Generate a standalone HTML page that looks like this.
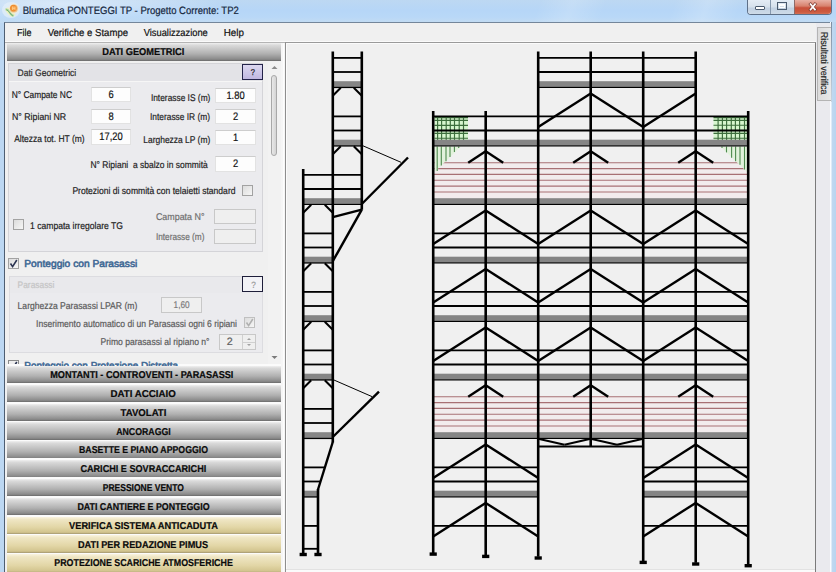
<!DOCTYPE html>
<html><head><meta charset="utf-8"><style>
html,body{margin:0;padding:0}
body{width:836px;height:572px;overflow:hidden;position:relative;background:#bcd7f2;font-family:"Liberation Sans",sans-serif}
.t{position:absolute;white-space:nowrap;line-height:0;height:0;transform-origin:0 0;-webkit-text-stroke:0.2px currentColor;text-rendering:geometricPrecision}
</style></head><body>
<div style="position:absolute;left:0;top:0;width:836px;height:23px;background:linear-gradient(180deg,#bdd8f2 0%,#b6d6f7 45%,#b9d8f7 75%,#c4dcf2 100%)"></div>
<div style="position:absolute;left:0;top:0;width:836px;height:22px;background:linear-gradient(110deg,rgba(255,255,255,0) 0%,rgba(255,255,255,0) 64%,rgba(255,255,255,0.16) 68%,rgba(255,255,255,0) 72%,rgba(255,255,255,0) 80%,rgba(255,255,255,0.18) 84%,rgba(255,255,255,0) 88%)"></div>
<div style="position:absolute;left:0;top:0;width:300px;height:22px;background:radial-gradient(ellipse 160px 18px at 60px 4px,rgba(255,255,255,0.45),rgba(255,255,255,0))"></div>
<svg style="position:absolute;left:0;top:0" width="24" height="22" viewBox="0 0 24 22">
<defs><radialGradient id="halo"><stop offset="0" stop-color="#fff6d8"/><stop offset="0.6" stop-color="#fbe9c8" stop-opacity="0.8"/><stop offset="1" stop-color="#fbe9c8" stop-opacity="0"/></radialGradient>
<radialGradient id="orb" cx="0.45" cy="0.45"><stop offset="0" stop-color="#ffb060"/><stop offset="0.7" stop-color="#ee8a2c"/><stop offset="1" stop-color="#e9a050" stop-opacity="0.6"/></radialGradient></defs>
<ellipse cx="11" cy="10" rx="9" ry="8" fill="#e6f0f8" opacity="0.7"/>
<path d="M4.8 9.5 Q7 6.5 9 8 Q11 11.5 15.5 14.5 Q14 17.5 10.5 16.5 Q7 13.5 4.8 9.5 Z" fill="#eef2c0"/>
<path d="M5.6 9.6 Q8 9 9.6 12 Q11 14.8 13.6 16" stroke="#9fd09a" stroke-width="2.2" fill="none" opacity="0.9"/>
<path d="M6.4 9.8 Q8.6 10.5 10 13 Q11.2 15 12.8 15.8" stroke="#5f9a60" stroke-width="0.9" fill="none" opacity="0.8"/>
<circle cx="13.8" cy="8.6" r="6" fill="url(#halo)"/>
<circle cx="13.8" cy="8.5" r="4" fill="url(#orb)"/>
<path d="M12.6 6.5 V10 M15 6.5 V10 M12.6 8.3 H15" stroke="#ffd08a" stroke-width="0.8"/>
</svg>

<div style="position:absolute;left:747px;top:0;width:85px;height:15px;border:1px solid #5e7088;border-top:none;border-radius:0 0 4px 4px;box-sizing:border-box;overflow:hidden;background:#fff">
<div style="position:absolute;left:0;top:0;width:22px;height:15px;background:linear-gradient(180deg,#e4ecf5,#d6e1ec 45%,#c2d1e2 55%,#d0dde9)"></div>
<div style="position:absolute;left:22px;top:0;width:1px;height:15px;background:#8799ae"></div>
<div style="position:absolute;left:23px;top:0;width:23px;height:15px;background:linear-gradient(180deg,#e4ecf5,#d6e1ec 45%,#c2d1e2 55%,#d0dde9)"></div>
<div style="position:absolute;left:46px;top:0;width:1px;height:15px;background:#8d6a68"></div>
<div style="position:absolute;left:47px;top:0;width:38px;height:15px;background:linear-gradient(180deg,#e8b0a4,#d8826e 40%,#c8503a 52%,#cc5a40 80%,#d87a60)"></div>
</div>
<div style="position:absolute;left:755px;top:6px;width:10px;height:4px;background:#fff;border:1px solid #4a5a6e;box-sizing:border-box;border-radius:1px"></div>
<div style="position:absolute;left:777px;top:2px;width:10px;height:8px;border:1px solid #4a5a6e;box-sizing:border-box;background:transparent"><div style="position:absolute;left:1px;top:1px;right:1px;bottom:1px;border:1px solid #fff;border-top-width:2px"></div></div>
<svg style="position:absolute;left:806px;top:1px" width="13" height="11" viewBox="0 0 13 11">
<path d="M4.6 3.2 L9 8.6 M9 3.2 L4.6 8.6" stroke="#7a3a30" stroke-width="3.2" stroke-linecap="square" opacity="0.85"/>
<path d="M4.6 3.2 L9 8.6 M9 3.2 L4.6 8.6" stroke="#fff" stroke-width="1.7" stroke-linecap="square"/></svg>
<div style="position:absolute;left:4px;top:22px;width:828px;height:550px;background:#f0f0f0;border-left:1px solid #4e5e72;border-top:1px solid #74869a;box-sizing:border-box"></div>
<div style="position:absolute;left:830px;top:22px;width:6px;height:550px;background:linear-gradient(90deg,#fafcff 0%,#fafcff 15%,#c0d8f0 35%,#b8d4f0)"></div>
<div style="position:absolute;left:831px;top:22px;width:1px;height:80px;background:linear-gradient(180deg,#7d8ea2,#c8d4e0)"></div>
<div style="position:absolute;left:5px;top:23px;width:826px;height:18px;background:#f0f0f0"></div>
<div style="position:absolute;left:5px;top:41px;width:826px;height:1px;background:#fafafa"></div>
<div style="position:absolute;left:5px;top:42px;width:811px;height:1px;background:#b4b4b4"></div>




<div style="position:absolute;left:7px;top:43.30px;width:274px;height:17.60px;background:linear-gradient(180deg,#f0f0f0 0%,#dadada 12%,#b0b0b0 60%,#8a8a8a 90%,#6a6a6a 100%)"></div>

<div style="position:absolute;left:8px;top:63px;width:255px;height:189px;background:#ebebee;border:1px solid #d4d4d8;box-sizing:border-box"></div>
<div style="position:absolute;left:9px;top:64px;width:253px;height:17px;background:#e3e3e7;border-bottom:1px solid #f6f6f6"></div>

<div style="position:absolute;left:242px;top:64px;width:21px;height:16px;border:1px solid #24244a;box-sizing:border-box;background:linear-gradient(180deg,#dcd8f0,#c0b8e0)"></div>

<div style="position:absolute;left:91px;top:87px;width:40px;height:15px;background:#fdfdfd;border:1px solid #e2e2e2;border-top-color:#cdcdcd;box-sizing:border-box"></div>

<div style="position:absolute;left:91px;top:109px;width:40px;height:15px;background:#fdfdfd;border:1px solid #e2e2e2;border-top-color:#cdcdcd;box-sizing:border-box"></div>

<div style="position:absolute;left:91px;top:129px;width:40px;height:16px;background:#fdfdfd;border:1px solid #e2e2e2;border-top-color:#cdcdcd;box-sizing:border-box"></div>

<div style="position:absolute;left:215px;top:88px;width:41px;height:15px;background:#fdfdfd;border:1px solid #e2e2e2;border-top-color:#cdcdcd;box-sizing:border-box"></div>

<div style="position:absolute;left:215px;top:109px;width:41px;height:15px;background:#fdfdfd;border:1px solid #e2e2e2;border-top-color:#cdcdcd;box-sizing:border-box"></div>

<div style="position:absolute;left:215px;top:130px;width:41px;height:15px;background:#fdfdfd;border:1px solid #e2e2e2;border-top-color:#cdcdcd;box-sizing:border-box"></div>

<div style="position:absolute;left:215px;top:156px;width:41px;height:16px;background:#fdfdfd;border:1px solid #e2e2e2;border-top-color:#cdcdcd;box-sizing:border-box"></div>









<div style="position:absolute;left:242px;top:185px;width:11px;height:11px;border:1px solid #a2a2a2;box-sizing:border-box;background:linear-gradient(135deg,#dcdcdc,#f6f6f6)"></div>
<div style="position:absolute;left:13px;top:219px;width:11px;height:11px;border:1px solid #a2a2a2;box-sizing:border-box;background:linear-gradient(135deg,#dcdcdc,#f6f6f6)"></div>



<div style="position:absolute;left:214px;top:209px;width:42px;height:15px;background:#efefef;border:1px solid #c8c8c8;box-sizing:border-box"></div>
<div style="position:absolute;left:214px;top:229px;width:42px;height:15px;background:#efefef;border:1px solid #c8c8c8;box-sizing:border-box"></div>
<div style="position:absolute;left:8px;top:258px;width:11px;height:11px;border:1px solid #a2a2a2;box-sizing:border-box;background:linear-gradient(135deg,#dcdcdc,#f6f6f6)"></div>
<svg style="position:absolute;left:8px;top:258px" width="11" height="11"><path d="M2.5 5.5 L4.6 8.6 L8.8 2" stroke="#2a3350" stroke-width="1.6" fill="none"/></svg>

<div style="position:absolute;left:9px;top:276px;width:254px;height:77px;background:#ebebee;border:1px solid #dcdce0;box-sizing:border-box"></div>
<div style="position:absolute;left:10px;top:277px;width:252px;height:16px;background:#e9e9ec"></div>

<div style="position:absolute;left:242px;top:276px;width:21px;height:16px;border:1px solid #1e1e3a;box-sizing:border-box;background:#f2f2f6"></div>


<div style="position:absolute;left:161px;top:297px;width:41px;height:16px;background:#efefef;border:1px solid #c8c8c8;box-sizing:border-box"></div>


<div style="position:absolute;left:244px;top:317px;width:11px;height:11px;border:1px solid #c0c0c0;box-sizing:border-box;background:linear-gradient(135deg,#dcdcdc,#f6f6f6)"></div>
<svg style="position:absolute;left:244px;top:317px" width="11" height="11"><path d="M2.5 5.5 L4.6 8.6 L8.8 2" stroke="#b0b0b0" stroke-width="1.6" fill="none"/></svg>

<div style="position:absolute;left:219px;top:334px;width:37px;height:16px;background:#efefef;border:1px solid #c8c8c8;box-sizing:border-box"></div>

<div style="position:absolute;left:242px;top:335px;width:13px;height:14px;border-left:1px solid #d0d0d0;box-sizing:border-box"></div>
<div style="position:absolute;left:243px;top:342px;width:12px;height:1px;background:#d0d0d0"></div>
<svg style="position:absolute;left:243px;top:335px" width="12" height="14"><path d="M4 5 L6 3 L8 5 Z M4 9 L6 11 L8 9 Z" fill="#a0a0a0"/></svg>
<div style="position:absolute;left:5px;top:357px;width:266px;height:9px;overflow:hidden"><div style="position:absolute;left:3px;top:3px;width:11px;height:11px;border:1px solid #8a8a8a;box-sizing:border-box;background:#eee"></div><svg style="position:absolute;left:3px;top:3px" width="11" height="11"><path d="M2.5 5.5 L4.6 8.6 L8.8 2" stroke="#2a3350" stroke-width="1.6" fill="none"/></svg></div>
<div style="position:absolute;left:268px;top:62px;width:13px;height:302px;background:#f2f2f2"></div>
<svg style="position:absolute;left:270px;top:64px" width="9" height="6"><path d="M1.5 5 L4.5 2 L7.5 5 Z" fill="#8a8a8a"/></svg>
<svg style="position:absolute;left:270px;top:354.5px" width="9" height="6"><path d="M1.5 1 L4.5 4 L7.5 1 Z" fill="#7a7a7a"/></svg>
<div style="position:absolute;left:271px;top:75px;width:6px;height:81px;border:1px solid #a8a8a8;border-radius:3px;box-sizing:border-box;background:linear-gradient(90deg,#e8e8e8,#d4d4d4)"></div>
<div style="position:absolute;left:7px;top:364.20px;width:274px;height:1.8px;background:#fbfbfb"></div>
<div style="position:absolute;left:7px;top:366.00px;width:274px;height:17.40px;background:linear-gradient(180deg,#f0f0f0 0%,#dadada 12%,#b0b0b0 60%,#8a8a8a 90%,#6a6a6a 100%)"></div>

<div style="position:absolute;left:7px;top:383.03px;width:274px;height:1.8px;background:#fbfbfb"></div>
<div style="position:absolute;left:7px;top:384.83px;width:274px;height:17.40px;background:linear-gradient(180deg,#f0f0f0 0%,#dadada 12%,#b0b0b0 60%,#8a8a8a 90%,#6a6a6a 100%)"></div>

<div style="position:absolute;left:7px;top:401.86px;width:274px;height:1.8px;background:#fbfbfb"></div>
<div style="position:absolute;left:7px;top:403.66px;width:274px;height:17.40px;background:linear-gradient(180deg,#f0f0f0 0%,#dadada 12%,#b0b0b0 60%,#8a8a8a 90%,#6a6a6a 100%)"></div>

<div style="position:absolute;left:7px;top:420.69px;width:274px;height:1.8px;background:#fbfbfb"></div>
<div style="position:absolute;left:7px;top:422.49px;width:274px;height:17.40px;background:linear-gradient(180deg,#f0f0f0 0%,#dadada 12%,#b0b0b0 60%,#8a8a8a 90%,#6a6a6a 100%)"></div>

<div style="position:absolute;left:7px;top:439.52px;width:274px;height:1.8px;background:#fbfbfb"></div>
<div style="position:absolute;left:7px;top:441.32px;width:274px;height:17.40px;background:linear-gradient(180deg,#f0f0f0 0%,#dadada 12%,#b0b0b0 60%,#8a8a8a 90%,#6a6a6a 100%)"></div>

<div style="position:absolute;left:7px;top:458.35px;width:274px;height:1.8px;background:#fbfbfb"></div>
<div style="position:absolute;left:7px;top:460.15px;width:274px;height:17.40px;background:linear-gradient(180deg,#f0f0f0 0%,#dadada 12%,#b0b0b0 60%,#8a8a8a 90%,#6a6a6a 100%)"></div>

<div style="position:absolute;left:7px;top:477.18px;width:274px;height:1.8px;background:#fbfbfb"></div>
<div style="position:absolute;left:7px;top:478.98px;width:274px;height:17.40px;background:linear-gradient(180deg,#f0f0f0 0%,#dadada 12%,#b0b0b0 60%,#8a8a8a 90%,#6a6a6a 100%)"></div>

<div style="position:absolute;left:7px;top:496.01px;width:274px;height:1.8px;background:#fbfbfb"></div>
<div style="position:absolute;left:7px;top:497.81px;width:274px;height:17.40px;background:linear-gradient(180deg,#f0f0f0 0%,#dadada 12%,#b0b0b0 60%,#8a8a8a 90%,#6a6a6a 100%)"></div>

<div style="position:absolute;left:7px;top:514.84px;width:274px;height:1.8px;background:#fbfbfb"></div>
<div style="position:absolute;left:7px;top:516.64px;width:274px;height:17.40px;background:linear-gradient(180deg,#faf4e0 0%,#efe6c4 15%,#e2d6a6 60%,#d2c48e 90%,#a29670 100%)"></div>

<div style="position:absolute;left:7px;top:533.67px;width:274px;height:1.8px;background:#fbfbfb"></div>
<div style="position:absolute;left:7px;top:535.47px;width:274px;height:17.40px;background:linear-gradient(180deg,#faf4e0 0%,#efe6c4 15%,#e2d6a6 60%,#d2c48e 90%,#a29670 100%)"></div>

<div style="position:absolute;left:7px;top:552.50px;width:274px;height:1.8px;background:#fbfbfb"></div>
<div style="position:absolute;left:7px;top:554.30px;width:274px;height:19.00px;background:linear-gradient(180deg,#faf4e0 0%,#efe6c4 15%,#e2d6a6 60%,#d2c48e 90%,#a29670 100%)"></div>

<div style="position:absolute;left:281px;top:43px;width:4px;height:529px;background:#f6f6f6"></div>
<div style="position:absolute;left:285px;top:42px;width:531px;height:530px;background:#f0f0f0;border-left:1px solid #8e8e8e;border-top:1px solid #9a9a9a;border-right:1px solid #7a7a7a;box-sizing:border-box"></div>
<div style="position:absolute;left:286px;top:43px;width:1px;height:526px;background:#fbfbfb"></div>
<div style="position:absolute;left:286px;top:43px;width:529px;height:1px;background:#fbfbfb"></div>
<div style="position:absolute;left:283px;top:43px;width:1px;height:529px;background:#fdfdfd"></div>
<div style="position:absolute;left:286px;top:569px;width:529px;height:1px;background:#e2e2e2"></div>
<div style="position:absolute;left:286px;top:570px;width:529px;height:2px;background:#fbfbfb"></div>
<div style="position:absolute;left:816px;top:23px;width:14px;height:549px;background:#eaeaee"></div>
<div style="position:absolute;left:817px;top:27px;width:14px;height:74px;background:linear-gradient(90deg,#dcdcdc,#e8e8e8);border:1px solid #b4b4b4;border-right:none;box-sizing:border-box"></div>
<div style="position:absolute;left:286px;top:43px;width:529px;height:529px;overflow:hidden"><div style="position:absolute;left:-286px;top:-43px"><svg style="position:absolute;left:0;top:0" width="836" height="572" viewBox="0 0 836 572"><line x1="332.8" y1="57.9" x2="361.8" y2="57.9" stroke="#000" stroke-width="1.8"/><line x1="332.8" y1="72.0" x2="361.8" y2="72.0" stroke="#000" stroke-width="1.8"/><rect x="332.8" y="81.2" width="29.0" height="5.6" fill="#858585"/><line x1="332.8" y1="87.4" x2="361.8" y2="87.4" stroke="#000" stroke-width="1.4"/><line x1="332.8" y1="95.7" x2="340.8" y2="87.7" stroke="#000" stroke-width="2.0"/><line x1="353.8" y1="87.7" x2="361.8" y2="95.7" stroke="#000" stroke-width="2.0"/><line x1="332.8" y1="116.4" x2="361.8" y2="116.4" stroke="#000" stroke-width="1.8"/><line x1="332.8" y1="130.5" x2="361.8" y2="130.5" stroke="#000" stroke-width="1.8"/><rect x="332.8" y="139.7" width="29.0" height="5.6" fill="#858585"/><line x1="332.8" y1="145.9" x2="361.8" y2="145.9" stroke="#000" stroke-width="1.4"/><line x1="332.8" y1="154.2" x2="340.8" y2="146.2" stroke="#000" stroke-width="2.0"/><line x1="353.8" y1="146.2" x2="361.8" y2="154.2" stroke="#000" stroke-width="2.0"/><line x1="303.2" y1="174.9" x2="361.8" y2="174.9" stroke="#000" stroke-width="1.8"/><line x1="303.2" y1="189.0" x2="361.8" y2="189.0" stroke="#000" stroke-width="1.8"/><rect x="303.2" y="198.2" width="58.6" height="5.6" fill="#858585"/><line x1="303.2" y1="204.4" x2="361.8" y2="204.4" stroke="#000" stroke-width="1.4"/><line x1="303.2" y1="212.7" x2="311.2" y2="204.7" stroke="#000" stroke-width="2.0"/><line x1="324.8" y1="204.7" x2="332.8" y2="212.7" stroke="#000" stroke-width="2.0"/><line x1="303.2" y1="233.4" x2="332.8" y2="233.4" stroke="#000" stroke-width="1.8"/><line x1="303.2" y1="247.5" x2="332.8" y2="247.5" stroke="#000" stroke-width="1.8"/><rect x="303.2" y="256.7" width="29.6" height="5.6" fill="#858585"/><line x1="303.2" y1="262.9" x2="332.8" y2="262.9" stroke="#000" stroke-width="1.4"/><line x1="303.2" y1="271.2" x2="311.2" y2="263.2" stroke="#000" stroke-width="2.0"/><line x1="324.8" y1="263.2" x2="332.8" y2="271.2" stroke="#000" stroke-width="2.0"/><line x1="303.2" y1="291.9" x2="332.8" y2="291.9" stroke="#000" stroke-width="1.8"/><line x1="303.2" y1="306.0" x2="332.8" y2="306.0" stroke="#000" stroke-width="1.8"/><rect x="303.2" y="315.2" width="29.6" height="5.6" fill="#858585"/><line x1="303.2" y1="321.4" x2="332.8" y2="321.4" stroke="#000" stroke-width="1.4"/><line x1="303.2" y1="329.7" x2="311.2" y2="321.7" stroke="#000" stroke-width="2.0"/><line x1="324.8" y1="321.7" x2="332.8" y2="329.7" stroke="#000" stroke-width="2.0"/><line x1="303.2" y1="350.4" x2="332.8" y2="350.4" stroke="#000" stroke-width="1.8"/><line x1="303.2" y1="364.5" x2="332.8" y2="364.5" stroke="#000" stroke-width="1.8"/><rect x="303.2" y="373.7" width="29.6" height="5.6" fill="#858585"/><line x1="303.2" y1="379.9" x2="332.8" y2="379.9" stroke="#000" stroke-width="1.4"/><line x1="303.2" y1="388.2" x2="311.2" y2="380.2" stroke="#000" stroke-width="2.0"/><line x1="324.8" y1="380.2" x2="332.8" y2="388.2" stroke="#000" stroke-width="2.0"/><line x1="303.2" y1="408.9" x2="332.8" y2="408.9" stroke="#000" stroke-width="1.8"/><line x1="303.2" y1="423.0" x2="332.8" y2="423.0" stroke="#000" stroke-width="1.8"/><rect x="303.2" y="432.2" width="29.6" height="5.6" fill="#858585"/><line x1="303.2" y1="438.4" x2="332.8" y2="438.4" stroke="#000" stroke-width="1.4"/><line x1="303.2" y1="467.4" x2="324.8" y2="467.4" stroke="#000" stroke-width="1.8"/><line x1="303.2" y1="481.5" x2="320.4" y2="481.5" stroke="#000" stroke-width="1.8"/><rect x="303.2" y="490.7" width="14.8" height="5.6" fill="#858585"/><line x1="303.2" y1="496.9" x2="318.0" y2="496.9" stroke="#000" stroke-width="1.4"/><line x1="303.2" y1="525.9" x2="318.0" y2="525.9" stroke="#000" stroke-width="1.8"/><line x1="303.2" y1="548.8" x2="318.0" y2="548.8" stroke="#000" stroke-width="1.8"/><line x1="332.8" y1="51.5" x2="332.8" y2="442.5" stroke="#000" stroke-width="2.6"/><line x1="361.8" y1="51.5" x2="361.8" y2="209.8" stroke="#000" stroke-width="2.6"/><line x1="303.2" y1="169.0" x2="303.2" y2="554.5" stroke="#000" stroke-width="2.6"/><line x1="318.0" y1="489.0" x2="318.0" y2="554.5" stroke="#000" stroke-width="2.6"/><line x1="332.8" y1="442.0" x2="318.0" y2="489.5" stroke="#000" stroke-width="2.4"/><line x1="332.8" y1="217.2" x2="361.8" y2="209.6" stroke="#000" stroke-width="2.4"/><line x1="361.8" y1="209.6" x2="332.8" y2="261.2" stroke="#000" stroke-width="2.4"/><line x1="361.8" y1="145.3" x2="401.0" y2="162.3" stroke="#000" stroke-width="1.0"/><line x1="361.8" y1="204.0" x2="408.0" y2="157.5" stroke="#000" stroke-width="2.4"/><line x1="332.8" y1="379.5" x2="372.0" y2="396.6" stroke="#000" stroke-width="1.0"/><line x1="332.8" y1="437.0" x2="379.0" y2="391.7" stroke="#000" stroke-width="2.4"/><rect x="299.6" y="552.8" width="7.2" height="3.4" fill="#000"/><rect x="314.4" y="552.8" width="7.2" height="3.4" fill="#000"/><rect x="433.2" y="162.7" width="315.0" height="35.5" fill="#f2eced"/><line x1="433.2" y1="162.7" x2="748.2" y2="162.7" stroke="#a87074" stroke-width="1.1"/><line x1="433.2" y1="168.6" x2="748.2" y2="168.6" stroke="#a87074" stroke-width="1.1"/><line x1="433.2" y1="174.4" x2="748.2" y2="174.4" stroke="#a87074" stroke-width="1.1"/><line x1="433.2" y1="180.3" x2="748.2" y2="180.3" stroke="#a87074" stroke-width="1.1"/><line x1="433.2" y1="186.1" x2="748.2" y2="186.1" stroke="#a87074" stroke-width="1.1"/><line x1="433.2" y1="192.0" x2="748.2" y2="192.0" stroke="#a87074" stroke-width="1.1"/><rect x="433.2" y="396.7" width="315.0" height="35.5" fill="#f2eced"/><line x1="433.2" y1="396.7" x2="748.2" y2="396.7" stroke="#a87074" stroke-width="1.1"/><line x1="433.2" y1="402.6" x2="748.2" y2="402.6" stroke="#a87074" stroke-width="1.1"/><line x1="433.2" y1="408.4" x2="748.2" y2="408.4" stroke="#a87074" stroke-width="1.1"/><line x1="433.2" y1="414.3" x2="748.2" y2="414.3" stroke="#a87074" stroke-width="1.1"/><line x1="433.2" y1="420.1" x2="748.2" y2="420.1" stroke="#a87074" stroke-width="1.1"/><line x1="433.2" y1="426.0" x2="748.2" y2="426.0" stroke="#a87074" stroke-width="1.1"/><rect x="434.5" y="116.5" width="33.5" height="23.8" fill="#d6f6ce"/><line x1="437.6" y1="116.5" x2="437.6" y2="140.3" stroke="#3c6e3c" stroke-width="1.15"/><line x1="441.6" y1="116.5" x2="441.6" y2="140.3" stroke="#3c6e3c" stroke-width="1.15"/><line x1="446.2" y1="116.5" x2="446.2" y2="140.3" stroke="#3c6e3c" stroke-width="1.15"/><line x1="450.3" y1="116.5" x2="450.3" y2="140.3" stroke="#3c6e3c" stroke-width="1.15"/><line x1="454.5" y1="116.5" x2="454.5" y2="140.3" stroke="#3c6e3c" stroke-width="1.15"/><line x1="459.2" y1="116.5" x2="459.2" y2="140.3" stroke="#3c6e3c" stroke-width="1.15"/><line x1="463.5" y1="116.5" x2="463.5" y2="140.3" stroke="#3c6e3c" stroke-width="1.15"/><line x1="434.5" y1="117.6" x2="468.0" y2="117.6" stroke="#3c6e3c" stroke-width="1.15"/><line x1="434.5" y1="120.3" x2="468.0" y2="120.3" stroke="#3c6e3c" stroke-width="1.15"/><line x1="434.5" y1="125.3" x2="468.0" y2="125.3" stroke="#3c6e3c" stroke-width="1.15"/><line x1="434.5" y1="133.4" x2="468.0" y2="133.4" stroke="#3c6e3c" stroke-width="1.15"/><line x1="434.5" y1="138.2" x2="468.0" y2="138.2" stroke="#3c6e3c" stroke-width="1.15"/><rect x="713.5" y="116.5" width="34.0" height="23.8" fill="#d6f6ce"/><line x1="718.1" y1="116.5" x2="718.1" y2="140.3" stroke="#3c6e3c" stroke-width="1.15"/><line x1="722.4" y1="116.5" x2="722.4" y2="140.3" stroke="#3c6e3c" stroke-width="1.15"/><line x1="726.6" y1="116.5" x2="726.6" y2="140.3" stroke="#3c6e3c" stroke-width="1.15"/><line x1="731.3" y1="116.5" x2="731.3" y2="140.3" stroke="#3c6e3c" stroke-width="1.15"/><line x1="735.4" y1="116.5" x2="735.4" y2="140.3" stroke="#3c6e3c" stroke-width="1.15"/><line x1="739.6" y1="116.5" x2="739.6" y2="140.3" stroke="#3c6e3c" stroke-width="1.15"/><line x1="744.5" y1="116.5" x2="744.5" y2="140.3" stroke="#3c6e3c" stroke-width="1.15"/><line x1="713.5" y1="117.6" x2="747.5" y2="117.6" stroke="#3c6e3c" stroke-width="1.15"/><line x1="713.5" y1="120.3" x2="747.5" y2="120.3" stroke="#3c6e3c" stroke-width="1.15"/><line x1="713.5" y1="125.2" x2="747.5" y2="125.2" stroke="#3c6e3c" stroke-width="1.15"/><line x1="713.5" y1="133.3" x2="747.5" y2="133.3" stroke="#3c6e3c" stroke-width="1.15"/><line x1="713.5" y1="138.2" x2="747.5" y2="138.2" stroke="#3c6e3c" stroke-width="1.15"/><polygon points="434.5,146.5 461,146.5 434.5,172" fill="#e2f2dc"/><polygon points="747,146.5 720.5,146.5 747,172" fill="#e2f2dc"/><line x1="437.2" y1="146.5" x2="437.2" y2="171.0" stroke="#4d8a4d" stroke-width="1.1"/><line x1="441.3" y1="146.5" x2="441.3" y2="165.6" stroke="#4d8a4d" stroke-width="1.1"/><line x1="446.0" y1="146.5" x2="446.0" y2="161.3" stroke="#4d8a4d" stroke-width="1.1"/><line x1="450.0" y1="146.5" x2="450.0" y2="157.0" stroke="#4d8a4d" stroke-width="1.1"/><line x1="454.4" y1="146.5" x2="454.4" y2="152.0" stroke="#4d8a4d" stroke-width="1.1"/><line x1="458.7" y1="146.5" x2="458.7" y2="148.0" stroke="#4d8a4d" stroke-width="1.1"/><line x1="744.5" y1="146.5" x2="744.5" y2="169.5" stroke="#4d8a4d" stroke-width="1.1"/><line x1="740.0" y1="146.5" x2="740.0" y2="164.7" stroke="#4d8a4d" stroke-width="1.1"/><line x1="735.6" y1="146.5" x2="735.6" y2="161.2" stroke="#4d8a4d" stroke-width="1.1"/><line x1="731.6" y1="146.5" x2="731.6" y2="157.7" stroke="#4d8a4d" stroke-width="1.1"/><line x1="726.5" y1="146.5" x2="726.5" y2="152.4" stroke="#4d8a4d" stroke-width="1.1"/><line x1="722.0" y1="146.5" x2="722.0" y2="148.0" stroke="#4d8a4d" stroke-width="1.1"/><line x1="538.2" y1="57.9" x2="695.7" y2="57.9" stroke="#000" stroke-width="1.8"/><line x1="538.2" y1="72.0" x2="695.7" y2="72.0" stroke="#000" stroke-width="1.8"/><rect x="538.2" y="81.2" width="157.5" height="5.6" fill="#858585"/><line x1="538.2" y1="87.4" x2="695.7" y2="87.4" stroke="#000" stroke-width="1.4"/><line x1="433.2" y1="116.4" x2="748.2" y2="116.4" stroke="#000" stroke-width="1.8"/><line x1="433.2" y1="130.5" x2="748.2" y2="130.5" stroke="#000" stroke-width="1.8"/><line x1="538.2" y1="127.0" x2="590.7" y2="93.4" stroke="#000" stroke-width="2.4"/><line x1="590.7" y1="93.4" x2="643.2" y2="127.0" stroke="#000" stroke-width="2.4"/><line x1="643.2" y1="127.0" x2="695.7" y2="93.4" stroke="#000" stroke-width="2.4"/><rect x="433.2" y="139.7" width="315.0" height="5.6" fill="#858585"/><line x1="433.2" y1="145.9" x2="748.2" y2="145.9" stroke="#000" stroke-width="1.4"/><line x1="468.2" y1="162.7" x2="485.7" y2="151.2" stroke="#000" stroke-width="2.4"/><line x1="485.7" y1="151.2" x2="503.2" y2="162.7" stroke="#000" stroke-width="2.4"/><line x1="573.2" y1="162.7" x2="590.7" y2="151.2" stroke="#000" stroke-width="2.4"/><line x1="590.7" y1="151.2" x2="608.2" y2="162.7" stroke="#000" stroke-width="2.4"/><line x1="678.2" y1="162.7" x2="695.7" y2="151.2" stroke="#000" stroke-width="2.4"/><line x1="695.7" y1="151.2" x2="713.2" y2="162.7" stroke="#000" stroke-width="2.4"/><rect x="433.2" y="198.2" width="315.0" height="5.6" fill="#858585"/><line x1="433.2" y1="204.4" x2="748.2" y2="204.4" stroke="#000" stroke-width="1.4"/><line x1="433.2" y1="233.4" x2="748.2" y2="233.4" stroke="#000" stroke-width="1.8"/><line x1="433.2" y1="247.5" x2="748.2" y2="247.5" stroke="#000" stroke-width="1.8"/><line x1="433.2" y1="244.0" x2="485.7" y2="210.4" stroke="#000" stroke-width="2.4"/><line x1="485.7" y1="210.4" x2="538.2" y2="244.0" stroke="#000" stroke-width="2.4"/><line x1="538.2" y1="244.0" x2="590.7" y2="210.4" stroke="#000" stroke-width="2.4"/><line x1="590.7" y1="210.4" x2="643.2" y2="244.0" stroke="#000" stroke-width="2.4"/><line x1="643.2" y1="244.0" x2="695.7" y2="210.4" stroke="#000" stroke-width="2.4"/><line x1="695.7" y1="210.4" x2="748.2" y2="244.0" stroke="#000" stroke-width="2.4"/><rect x="433.2" y="256.7" width="315.0" height="5.6" fill="#858585"/><line x1="433.2" y1="262.9" x2="748.2" y2="262.9" stroke="#000" stroke-width="1.4"/><line x1="433.2" y1="291.9" x2="748.2" y2="291.9" stroke="#000" stroke-width="1.8"/><line x1="433.2" y1="306.0" x2="748.2" y2="306.0" stroke="#000" stroke-width="1.8"/><line x1="433.2" y1="302.5" x2="485.7" y2="268.9" stroke="#000" stroke-width="2.4"/><line x1="485.7" y1="268.9" x2="538.2" y2="302.5" stroke="#000" stroke-width="2.4"/><line x1="538.2" y1="302.5" x2="590.7" y2="268.9" stroke="#000" stroke-width="2.4"/><line x1="590.7" y1="268.9" x2="643.2" y2="302.5" stroke="#000" stroke-width="2.4"/><line x1="643.2" y1="302.5" x2="695.7" y2="268.9" stroke="#000" stroke-width="2.4"/><line x1="695.7" y1="268.9" x2="748.2" y2="302.5" stroke="#000" stroke-width="2.4"/><rect x="433.2" y="315.2" width="315.0" height="5.6" fill="#858585"/><line x1="433.2" y1="321.4" x2="748.2" y2="321.4" stroke="#000" stroke-width="1.4"/><line x1="433.2" y1="350.4" x2="748.2" y2="350.4" stroke="#000" stroke-width="1.8"/><line x1="433.2" y1="364.5" x2="748.2" y2="364.5" stroke="#000" stroke-width="1.8"/><line x1="433.2" y1="361.0" x2="485.7" y2="327.4" stroke="#000" stroke-width="2.4"/><line x1="485.7" y1="327.4" x2="538.2" y2="361.0" stroke="#000" stroke-width="2.4"/><line x1="538.2" y1="361.0" x2="590.7" y2="327.4" stroke="#000" stroke-width="2.4"/><line x1="590.7" y1="327.4" x2="643.2" y2="361.0" stroke="#000" stroke-width="2.4"/><line x1="643.2" y1="361.0" x2="695.7" y2="327.4" stroke="#000" stroke-width="2.4"/><line x1="695.7" y1="327.4" x2="748.2" y2="361.0" stroke="#000" stroke-width="2.4"/><rect x="433.2" y="373.7" width="315.0" height="5.6" fill="#858585"/><line x1="433.2" y1="379.9" x2="748.2" y2="379.9" stroke="#000" stroke-width="1.4"/><line x1="468.2" y1="396.7" x2="485.7" y2="385.2" stroke="#000" stroke-width="2.4"/><line x1="485.7" y1="385.2" x2="503.2" y2="396.7" stroke="#000" stroke-width="2.4"/><line x1="573.2" y1="396.7" x2="590.7" y2="385.2" stroke="#000" stroke-width="2.4"/><line x1="590.7" y1="385.2" x2="608.2" y2="396.7" stroke="#000" stroke-width="2.4"/><line x1="678.2" y1="396.7" x2="695.7" y2="385.2" stroke="#000" stroke-width="2.4"/><line x1="695.7" y1="385.2" x2="713.2" y2="396.7" stroke="#000" stroke-width="2.4"/><rect x="433.2" y="432.2" width="315.0" height="5.6" fill="#858585"/><line x1="433.2" y1="438.4" x2="748.2" y2="438.4" stroke="#000" stroke-width="1.4"/><line x1="538.2" y1="438.7" x2="564.5" y2="444.7" stroke="#000" stroke-width="2.0"/><line x1="564.5" y1="444.7" x2="590.7" y2="438.7" stroke="#000" stroke-width="2.0"/><line x1="590.7" y1="438.7" x2="617.0" y2="444.7" stroke="#000" stroke-width="2.0"/><line x1="617.0" y1="444.7" x2="643.2" y2="438.7" stroke="#000" stroke-width="2.0"/><line x1="538.2" y1="446.5" x2="643.2" y2="446.5" stroke="#000" stroke-width="2.0"/><line x1="433.2" y1="467.4" x2="538.2" y2="467.4" stroke="#000" stroke-width="1.8"/><line x1="433.2" y1="481.5" x2="538.2" y2="481.5" stroke="#000" stroke-width="1.8"/><line x1="433.2" y1="478.0" x2="485.7" y2="444.4" stroke="#000" stroke-width="2.4"/><line x1="485.7" y1="444.4" x2="538.2" y2="478.0" stroke="#000" stroke-width="2.4"/><line x1="643.2" y1="467.4" x2="748.2" y2="467.4" stroke="#000" stroke-width="1.8"/><line x1="643.2" y1="481.5" x2="748.2" y2="481.5" stroke="#000" stroke-width="1.8"/><line x1="643.2" y1="478.0" x2="695.7" y2="444.4" stroke="#000" stroke-width="2.4"/><line x1="695.7" y1="444.4" x2="748.2" y2="478.0" stroke="#000" stroke-width="2.4"/><rect x="433.2" y="490.7" width="105.0" height="5.6" fill="#858585"/><line x1="433.2" y1="496.9" x2="538.2" y2="496.9" stroke="#000" stroke-width="1.4"/><rect x="643.2" y="490.7" width="105.0" height="5.6" fill="#858585"/><line x1="643.2" y1="496.9" x2="748.2" y2="496.9" stroke="#000" stroke-width="1.4"/><line x1="433.2" y1="525.9" x2="538.2" y2="525.9" stroke="#000" stroke-width="1.8"/><line x1="433.2" y1="536.5" x2="485.7" y2="502.9" stroke="#000" stroke-width="2.4"/><line x1="485.7" y1="502.9" x2="538.2" y2="536.5" stroke="#000" stroke-width="2.4"/><line x1="643.2" y1="525.9" x2="748.2" y2="525.9" stroke="#000" stroke-width="1.8"/><line x1="643.2" y1="536.5" x2="695.7" y2="502.9" stroke="#000" stroke-width="2.4"/><line x1="695.7" y1="502.9" x2="748.2" y2="536.5" stroke="#000" stroke-width="2.4"/><line x1="433.2" y1="111.0" x2="433.2" y2="552.9" stroke="#000" stroke-width="2.6"/><rect x="429.6" y="552.4" width="7.2" height="3.4" fill="#000"/><line x1="485.7" y1="111.0" x2="485.7" y2="555.2" stroke="#000" stroke-width="2.6"/><rect x="482.1" y="554.7" width="7.2" height="3.4" fill="#000"/><line x1="538.2" y1="51.5" x2="538.2" y2="556.8" stroke="#000" stroke-width="2.6"/><rect x="534.6" y="556.3" width="7.2" height="3.4" fill="#000"/><line x1="590.7" y1="51.5" x2="590.7" y2="446.7" stroke="#000" stroke-width="2.6"/><line x1="643.2" y1="51.5" x2="643.2" y2="561.2" stroke="#000" stroke-width="2.6"/><rect x="639.6" y="560.7" width="7.2" height="3.4" fill="#000"/><line x1="695.7" y1="51.5" x2="695.7" y2="562.8" stroke="#000" stroke-width="2.6"/><rect x="692.1" y="562.3" width="7.2" height="3.4" fill="#000"/><line x1="748.2" y1="111.0" x2="748.2" y2="564.5" stroke="#000" stroke-width="2.6"/><rect x="744.6" y="564.0" width="7.2" height="3.4" fill="#000"/></svg></div></div>
<svg style="position:absolute;left:0;top:0" width="836" height="572" viewBox="0 0 836 572" font-family="Liberation Sans" text-rendering="geometricPrecision"><defs><clipPath id="clipP"><rect x="0" y="357" width="270" height="9"/></clipPath></defs><text x="22.70" y="13.70" font-size="10.61" textLength="216.10" lengthAdjust="spacingAndGlyphs" fill="#14263c" stroke="#14263c" stroke-width="0.2">Blumatica PONTEGGI TP - Progetto Corrente: TP2</text><text x="17.00" y="35.80" font-size="10.06" textLength="14.50" lengthAdjust="spacingAndGlyphs" fill="#111" stroke="#111" stroke-width="0.2">File</text><text x="47.70" y="35.80" font-size="10.06" textLength="80.40" lengthAdjust="spacingAndGlyphs" fill="#111" stroke="#111" stroke-width="0.2">Verifiche e Stampe</text><text x="143.70" y="35.80" font-size="10.06" textLength="64.10" lengthAdjust="spacingAndGlyphs" fill="#111" stroke="#111" stroke-width="0.2">Visualizzazione</text><text x="223.70" y="35.80" font-size="10.06" textLength="20.20" lengthAdjust="spacingAndGlyphs" fill="#111" stroke="#111" stroke-width="0.2">Help</text><text x="102.20" y="55.40" font-size="9.92" textLength="82.20" lengthAdjust="spacingAndGlyphs" fill="#0a0a0a" stroke="#0a0a0a" stroke-width="0.2" font-weight="bold">DATI GEOMETRICI</text><text x="17.60" y="76.00" font-size="9.50" textLength="58.60" lengthAdjust="spacingAndGlyphs" fill="#2a2a2a" stroke="#2a2a2a" stroke-width="0.2">Dati Geometrici</text><text x="250.80" y="75.00" font-size="8.38" textLength="4.20" lengthAdjust="spacingAndGlyphs" fill="#222" stroke="#222" stroke-width="0.25">?</text><text x="108.39" y="98.10" font-size="10.89" textLength="5.21" lengthAdjust="spacingAndGlyphs" fill="#111" stroke="#111" stroke-width="0.2">6</text><text x="108.39" y="120.10" font-size="10.89" textLength="5.21" lengthAdjust="spacingAndGlyphs" fill="#111" stroke="#111" stroke-width="0.2">8</text><text x="99.28" y="140.10" font-size="10.89" textLength="23.45" lengthAdjust="spacingAndGlyphs" fill="#111" stroke="#111" stroke-width="0.2">17,20</text><text x="226.38" y="99.10" font-size="10.89" textLength="18.23" lengthAdjust="spacingAndGlyphs" fill="#111" stroke="#111" stroke-width="0.2">1.80</text><text x="232.89" y="120.10" font-size="10.89" textLength="5.21" lengthAdjust="spacingAndGlyphs" fill="#111" stroke="#111" stroke-width="0.2">2</text><text x="232.89" y="141.10" font-size="10.89" textLength="5.21" lengthAdjust="spacingAndGlyphs" fill="#111" stroke="#111" stroke-width="0.2">1</text><text x="232.89" y="167.10" font-size="10.89" textLength="5.21" lengthAdjust="spacingAndGlyphs" fill="#111" stroke="#111" stroke-width="0.2">2</text><text x="11.70" y="98.00" font-size="9.78" textLength="60.30" lengthAdjust="spacingAndGlyphs" fill="#1e1e1e" stroke="#1e1e1e" stroke-width="0.2">N° Campate NC</text><text x="12.00" y="119.80" font-size="9.78" textLength="54.20" lengthAdjust="spacingAndGlyphs" fill="#1e1e1e" stroke="#1e1e1e" stroke-width="0.2">N° Ripiani NR</text><text x="14.20" y="142.00" font-size="9.78" textLength="70.40" lengthAdjust="spacingAndGlyphs" fill="#1e1e1e" stroke="#1e1e1e" stroke-width="0.2">Altezza tot. HT (m)</text><text x="150.90" y="101.00" font-size="9.78" textLength="59.50" lengthAdjust="spacingAndGlyphs" fill="#1e1e1e" stroke="#1e1e1e" stroke-width="0.2">Interasse IS (m)</text><text x="150.00" y="120.00" font-size="9.78" textLength="60.00" lengthAdjust="spacingAndGlyphs" fill="#1e1e1e" stroke="#1e1e1e" stroke-width="0.2">Interasse IR (m)</text><text x="143.30" y="142.50" font-size="9.78" textLength="67.00" lengthAdjust="spacingAndGlyphs" fill="#1e1e1e" stroke="#1e1e1e" stroke-width="0.2">Larghezza LP (m)</text><text x="90.50" y="167.60" font-size="9.78" textLength="117.30" lengthAdjust="spacingAndGlyphs" fill="#1e1e1e" stroke="#1e1e1e" stroke-width="0.2">N° Ripiani&#160; a sbalzo in sommità</text><text x="72.40" y="194.00" font-size="9.78" textLength="163.10" lengthAdjust="spacingAndGlyphs" fill="#1e1e1e" stroke="#1e1e1e" stroke-width="0.2">Protezioni di sommità con telaietti standard</text><text x="30.00" y="228.80" font-size="9.78" textLength="93.00" lengthAdjust="spacingAndGlyphs" fill="#1e1e1e" stroke="#1e1e1e" stroke-width="0.2">1 campata irregolare TG</text><text x="155.90" y="220.00" font-size="9.78" textLength="48.60" lengthAdjust="spacingAndGlyphs" fill="#707070" stroke="#707070" stroke-width="0.2">Campata N°</text><text x="155.90" y="239.90" font-size="9.78" textLength="48.60" lengthAdjust="spacingAndGlyphs" fill="#707070" stroke="#707070" stroke-width="0.2">Interasse (m)</text><text x="24.30" y="267.00" font-size="10.06" textLength="113.00" lengthAdjust="spacingAndGlyphs" fill="#3e6894" stroke="#3e6894" stroke-width="0.55">Ponteggio con Parasassi</text><text x="17.60" y="288.40" font-size="9.50" textLength="36.80" lengthAdjust="spacingAndGlyphs" fill="#c4c4c4" stroke="#c4c4c4" stroke-width="0.2">Parasassi</text><text x="251.20" y="287.50" font-size="9.08" textLength="4.60" lengthAdjust="spacingAndGlyphs" fill="#9a9a9a" stroke="#9a9a9a" stroke-width="0.2">?</text><text x="17.60" y="308.50" font-size="9.78" textLength="119.70" lengthAdjust="spacingAndGlyphs" fill="#5a5a5a" stroke="#5a5a5a" stroke-width="0.2">Larghezza Parasassi LPAR (m)</text><text x="173.60" y="308.00" font-size="9.78" textLength="16.00" lengthAdjust="spacingAndGlyphs" fill="#7a7a7a" stroke="#7a7a7a" stroke-width="0.2">1,60</text><text x="36.00" y="326.60" font-size="9.78" textLength="201.00" lengthAdjust="spacingAndGlyphs" fill="#5a5a5a" stroke="#5a5a5a" stroke-width="0.2">Inserimento automatico di un Parasassi ogni 6 ripiani</text><text x="100.50" y="344.50" font-size="9.78" textLength="109.00" lengthAdjust="spacingAndGlyphs" fill="#5a5a5a" stroke="#5a5a5a" stroke-width="0.2">Primo parasassi al ripiano n°</text><text x="226.80" y="345.20" font-size="10.61" textLength="6.00" lengthAdjust="spacingAndGlyphs" fill="#606060" stroke="#606060" stroke-width="0.2">2</text><text x="24.30" y="369.00" font-size="10.06" textLength="153.70" lengthAdjust="spacingAndGlyphs" fill="#3e6894" stroke="#3e6894" stroke-width="0.55" clip-path="url(#clipP)">Ponteggio con Protezione Distretta</text><text x="50.20" y="378.10" font-size="9.92" textLength="183.20" lengthAdjust="spacingAndGlyphs" fill="#0a0a0a" stroke="#0a0a0a" stroke-width="0.2" font-weight="bold">MONTANTI - CONTROVENTI - PARASASSI</text><text x="110.50" y="396.93" font-size="9.92" textLength="65.30" lengthAdjust="spacingAndGlyphs" fill="#0a0a0a" stroke="#0a0a0a" stroke-width="0.2" font-weight="bold">DATI ACCIAIO</text><text x="120.60" y="415.76" font-size="9.92" textLength="45.80" lengthAdjust="spacingAndGlyphs" fill="#0a0a0a" stroke="#0a0a0a" stroke-width="0.2" font-weight="bold">TAVOLATI</text><text x="116.20" y="434.59" font-size="9.92" textLength="54.60" lengthAdjust="spacingAndGlyphs" fill="#0a0a0a" stroke="#0a0a0a" stroke-width="0.2" font-weight="bold">ANCORAGGI</text><text x="79.00" y="453.42" font-size="9.92" textLength="129.00" lengthAdjust="spacingAndGlyphs" fill="#0a0a0a" stroke="#0a0a0a" stroke-width="0.2" font-weight="bold">BASETTE E PIANO APPOGGIO</text><text x="80.40" y="472.25" font-size="9.92" textLength="125.90" lengthAdjust="spacingAndGlyphs" fill="#0a0a0a" stroke="#0a0a0a" stroke-width="0.2" font-weight="bold">CARICHI E SOVRACCARICHI</text><text x="102.80" y="491.08" font-size="9.92" textLength="81.10" lengthAdjust="spacingAndGlyphs" fill="#0a0a0a" stroke="#0a0a0a" stroke-width="0.2" font-weight="bold">PRESSIONE VENTO</text><text x="77.40" y="509.91" font-size="9.92" textLength="132.20" lengthAdjust="spacingAndGlyphs" fill="#0a0a0a" stroke="#0a0a0a" stroke-width="0.2" font-weight="bold">DATI CANTIERE E PONTEGGIO</text><text x="69.00" y="528.74" font-size="9.92" textLength="149.00" lengthAdjust="spacingAndGlyphs" fill="#0a0a0a" stroke="#0a0a0a" stroke-width="0.2" font-weight="bold">VERIFICA SISTEMA ANTICADUTA</text><text x="78.00" y="547.57" font-size="9.92" textLength="130.00" lengthAdjust="spacingAndGlyphs" fill="#0a0a0a" stroke="#0a0a0a" stroke-width="0.2" font-weight="bold">DATI PER REDAZIONE PIMUS</text><text x="54.30" y="566.40" font-size="9.92" textLength="178.50" lengthAdjust="spacingAndGlyphs" fill="#0a0a0a" stroke="#0a0a0a" stroke-width="0.2" font-weight="bold">PROTEZIONE SCARICHE ATMOSFERICHE</text><text x="0" y="0" transform="translate(820.6,31.8) rotate(90)" font-size="9.8" textLength="62.8" lengthAdjust="spacingAndGlyphs" fill="#222" stroke="#222" stroke-width="0.15">Risultati verifica</text></svg>
</body></html>
